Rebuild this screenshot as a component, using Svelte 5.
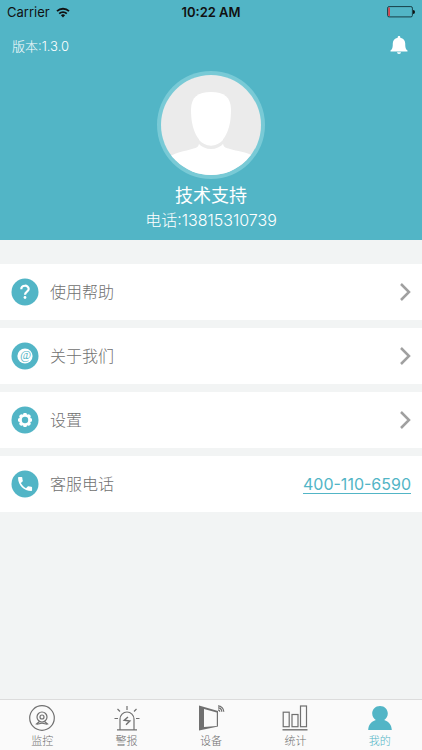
<script lang="ts">
	const phone = '13815310739';
	const hotline = '400-110-6590';

	const links = [
		{ icon: 'help', label: '使用帮助', href: '#help' },
		{ icon: 'about', label: '关于我们', href: '#about' },
		{ icon: 'settings', label: '设置', href: '#settings' }
	];

	const tabs = [
		{ id: 'monitor', label: '监控' },
		{ id: 'alarm', label: '警报' },
		{ id: 'device', label: '设备' },
		{ id: 'stats', label: '统计' },
		{ id: 'mine', label: '我的' }
	];

	let active = $state('mine');
</script>

{#snippet rowIcon(name: string)}
	<svg class="row-icon" viewBox="0 0 28 28" aria-hidden="true">
		<circle cx="14" cy="14" r="13.5" fill="#52b5c6" />
		{#if name === 'help'}
			<path d="M10.300 11.200c0-4.600 7.400-4.600 7.400-.2 0 2.800-3.700 2.600-3.700 5.800" fill="none" stroke="#fff" stroke-width="2.200" />
			<circle cx="14" cy="19.500" r="1.400" fill="#fff" />
		{:else if name === 'about'}
			<circle cx="14" cy="14" r="7.600" fill="#fff" />
			<text class="at" x="14.500" y="17" text-anchor="middle">@</text>
		{:else if name === 'settings'}
			<g fill="#fff">
				{#each [0, 45, 90, 135] as angle}
					<rect x="12.200" y="7" width="3.600" height="14" rx="1" transform="rotate({angle} 14 14)" />
				{/each}
				<circle cx="14" cy="14" r="6" />
			</g>
			<circle cx="14" cy="14" r="3.200" fill="#52b5c6" />
		{:else}
			<path transform="translate(4.700 4.700) scale(.78)" fill="#fff" d="M6.620 10.790c1.440 2.830 3.760 5.140 6.590 6.590l2.200-2.200c.27-.27.67-.36 1.020-.24 1.120.37 2.330.57 3.570.57.55 0 1 .45 1 1V20c0 .55-.45 1-1 1C10.610 21 3 13.390 3 4c0-.55.45-1 1-1h3.500c.55 0 1 .45 1 1 0 1.250.2 2.450.57 3.570.11.35.03.74-.25 1.020l-2.200 2.200z" />
		{/if}
	</svg>
{/snippet}

{#snippet tabIcon(name: string)}
	<svg class="tab-icon" viewBox="0 0 28 28" fill="none" stroke="currentColor" stroke-width="1.200" aria-hidden="true">
		{#if name === 'monitor'}
			<circle cx="14" cy="14" r="12.300" />
			<circle cx="14" cy="13" r="5" />
			<circle cx="14" cy="13" r="2" />
			<path d="M11.500 17.500l-3 2.500c2 .5 3-.8 5.500-.8s3.500 1.300 5.500.8l-3-2.500" />
		{:else if name === 'alarm'}
			<path d="M4 25.800h20M7 25.500V15a7 7 0 0 1 14 0v10.500" />
			<path d="M14 2v4M4.500 5l2.500 2.500M23.500 5L21 7.500M1.500 14.500h3.500M23 14.500h3.500" />
			<path d="M15 13l-3.800 3.300 5.600.8-3.800 3.600" stroke-width="1.400" />
		{:else if name === 'device'}
			<path d="M2 1.500L21 7v15.500L2 26.500zM7 5v18l12.800-1V8.500z" fill="currentColor" fill-rule="evenodd" stroke="none" />
			<path d="M21 5.800a2 2 0 0 1 1.800 2M21 3.800a4 4 0 0 1 3.800 4M21 1.800a6 6 0 0 1 5.800 6" />
		{:else if name === 'stats'}
			<path d="M1.500 25.800h25" stroke-width="1.400" />
			<rect x="2.200" y="8.200" width="6" height="14.500" />
			<rect x="11" y="10.500" width="6" height="12.200" />
			<rect x="19.500" y="2" width="6" height="20.700" />
		{:else}
			<path fill="currentColor" stroke="none" d="M14 2c4.600 0 7.800 3.400 7.800 7.600 0 2.700-1.500 5.100-3.600 6.500 4.700 1.600 7.400 5 7.600 9.900H2.200c.2-4.900 2.900-8.300 7.600-9.900-2.100-1.400-3.600-3.800-3.600-6.500C6.200 5.400 9.400 2 14 2z" />
		{/if}
	</svg>
{/snippet}

<div class="page">
	<header>
		<div class="status-bar">
			<span class="carrier">
				Carrier
				<svg class="wifi" viewBox="0 0 14 11" aria-hidden="true">
					<path d="M1 4.200a8.600 8.600 0 0 1 12 0M3.200 6.600a5.400 5.400 0 0 1 7.600 0" fill="none" stroke="#111" stroke-width="1.800" />
					<path d="M7 10.500L4.900 8.300a3 3 0 0 1 4.200 0z" fill="#111" />
				</svg>
			</span>
			<span class="time">10:22 AM</span>
			<svg class="battery" viewBox="0 0 28 12" aria-hidden="true">
				<rect x=".6" y=".6" width="24.800" height="10.300" rx="1.500" fill="none" stroke="#173f47" />
				<path d="M1.200 1.500h1.800v8.500H1.200z" fill="#d5424c" />
				<path d="M26 4a2 2 0 0 1 0 4z" fill="#111" />
			</svg>
		</div>

		<div class="top-row">
			<span class="version">版本:1.3.0</span>
			<button class="bell" type="button" aria-label="消息">
				<svg viewBox="0 0 18 20" aria-hidden="true">
					<path fill="#fff" d="M9 1c.8 0 1.300.5 1.300 1.300v.4c3.200.6 4.900 2.800 4.900 5.600 0 4 .4 6 2.300 7.300v.9H.5v-.9c1.900-1.300 2.300-3.300 2.300-7.300 0-2.800 1.700-5 4.900-5.600v-.4C7.700 1.500 8.200 1 9 1zM7 17.200h4a2 1.800 0 0 1-4 0z" />
				</svg>
			</button>
		</div>

		<div class="profile">
			<svg class="avatar" viewBox="0 0 108 108" role="img" aria-label="头像">
				<defs>
					<clipPath id="face"><circle cx="54" cy="54" r="50" /></clipPath>
				</defs>
				<circle cx="54" cy="54" r="54" fill="#79cad6" />
				<g clip-path="url(#face)">
					<path d="M0 0h108v108H0z" fill="#ebebeb" />
					<path fill="#fff" d="M42 66v6c0 4-3 5-7 6-7 2-14 3-22 7v23h84V85c-8-4-17-5-24-7-4-1-7-2-7-6v-6z" />
					<path fill="#ebebeb" d="M41 68c8 9 18 9 26 0v4c-7 8-19 8-26 0z" />
					<path fill="#fff" d="M54 21c13 0 20 5 20 18 0 20-7 35-20 35S34 59 34 39c0-13 7-18 20-18z" />
				</g>
			</svg>
			<h1>技术支持</h1>
			<p class="phone">电话:{phone}</p>
		</div>
	</header>

	<main>
		{#each links as link}
			<a class="row" href={link.href}>
				{@render rowIcon(link.icon)}
				<span class="row-label">{link.label}</span>
				<svg class="chevron" viewBox="0 0 12 20" aria-hidden="true">
					<path d="M2 2l8 8-8 8" fill="none" stroke="#a0a0a0" stroke-width="2.500" />
				</svg>
			</a>
		{/each}
		<div class="row">
			{@render rowIcon('phone')}
			<span class="row-label">客服电话</span>
			<a class="hotline" href="tel:{hotline}">{hotline}</a>
		</div>
	</main>

	<nav>
		{#each tabs as tab}
			<button class="tab" class:active={active === tab.id} type="button" onclick={() => (active = tab.id)}>
				{@render tabIcon(tab.id)}
				<span>{tab.label}</span>
			</button>
		{/each}
	</nav>
</div>

<style>
	.page {
		display: flex;
		flex-direction: column;
		min-height: 100vh;
		background: #f2f4f4;
		font-family: Inter, 'Noto Sans CJK SC', sans-serif;
		font-weight: 300;
	}
	button {
		padding: 0;
		border: 0;
		background: none;
		font: inherit;
		cursor: pointer;
	}
	svg {
		display: block;
		flex: none;
	}
	header {
		padding-bottom: 8px;
		background: #52b5c6;
		color: #fff;
	}
	.status-bar {
		display: grid;
		grid-template-columns: 1fr auto 1fr;
		align-items: center;
		height: 24px;
		padding: 0 7px;
		color: #111;
		font-size: 13px;
		font-weight: 400;
	}
	.carrier {
		display: flex;
		align-items: center;
		gap: 6px;
	}
	.wifi {
		width: 14px;
		height: 11px;
	}
	.time {
		font-weight: 600;
	}
	.battery {
		justify-self: end;
		width: 28px;
		height: 12px;
	}
	.top-row {
		display: flex;
		align-items: center;
		justify-content: space-between;
		height: 42px;
		padding: 0 14px 0 12px;
	}
	.version {
		font-size: 13px;
	}
	.bell svg {
		width: 18px;
		height: 20px;
	}
	.profile {
		display: flex;
		flex-direction: column;
		align-items: center;
		padding-top: 5px;
	}
	.avatar {
		width: 108px;
		height: 108px;
	}
	h1 {
		margin: 4px 0 0;
		font-size: 18px;
		font-weight: 400;
		line-height: 25px;
	}
	.phone {
		margin: 0;
		font-size: 16px;
		line-height: 24px;
	}
	main {
		flex: 1;
		display: flex;
		flex-direction: column;
		gap: 8px;
		padding: 24px 0;
	}
	.row {
		display: flex;
		align-items: center;
		height: 56px;
		padding: 0 11px;
		background: #fff;
		color: #707070;
		font-size: 16px;
		line-height: 24px;
		text-decoration: none;
	}
	.row-icon {
		width: 28px;
		height: 28px;
	}
	.at {
		fill: #52b5c6;
		font-family: 'Liberation Serif', serif;
		font-size: 12px;
		font-style: italic;
		font-weight: 400;
	}
	.row-label {
		flex: 1;
		margin-left: 11px;
	}
	.chevron {
		width: 12px;
		height: 20px;
	}
	.hotline {
		color: #52b5c6;
		font-weight: 400;
		text-underline-offset: 3px;
	}
	nav {
		display: grid;
		grid-template-columns: repeat(5, 1fr);
		height: 50px;
		border-top: 1px solid #dcdcdc;
		background: #fafafa;
	}
	.tab {
		display: flex;
		flex-direction: column;
		align-items: center;
		padding-top: 4px;
		color: #707070;
		font-size: 11px;
		line-height: 18px;
	}
	.tab.active {
		color: #52b5c6;
	}
	.tab-icon {
		width: 28px;
		height: 28px;
	}
</style>
